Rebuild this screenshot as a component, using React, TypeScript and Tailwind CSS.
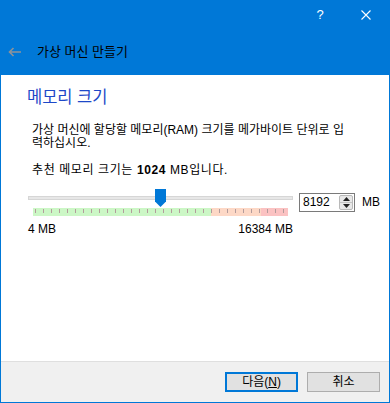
const ticks = Array.from({ length: 32 }, (_, i) => 2.5 + i * 8);

const SpinArrows = () => (
  <div className="ml-auto mr-px flex h-[15px] w-[14px] flex-col rounded-[2px] border border-[#b9b9b9] bg-[#e8e8e8]">
    <div className="flex flex-1 items-center justify-center">
      <svg width="7" height="4" viewBox="0 0 7 4">
        <path d="M3.5 0 L7 4 H0 Z" fill="#222" />
      </svg>
    </div>
    <div className="h-px bg-[#c4c4c4]" />
    <div className="flex flex-1 items-center justify-center">
      <svg width="7" height="4" viewBox="0 0 7 4">
        <path d="M0 0 H7 L3.5 4 Z" fill="#222" />
      </svg>
    </div>
  </div>
);

const App = () => {
  return (
    <div
      className="flex h-[403px] w-[390px] flex-col bg-[#0078d7] px-px pb-px text-black"
      style={{ fontFamily: '"Liberation Sans", "Noto Sans CJK KR", sans-serif' }}>
      {/* caption buttons */}
      <div className="flex h-[29px] justify-end">
        <div className="flex w-[46px] items-center justify-center text-[13px] text-white">?</div>
        <div className="flex w-[46px] items-center justify-center">
          <svg width="10" height="10" viewBox="0 0 10 10">
            <path d="M0.5 0.5 L9.5 9.5 M9.5 0.5 L0.5 9.5" stroke="#fff" strokeWidth="1.1" />
          </svg>
        </div>
      </div>

      {/* wizard title */}
      <div className="flex h-[46px] items-center">
        <svg className="ml-[7px]" width="14" height="10" viewBox="0 0 14 10">
          <path d="M13 5 H1.5 M5.5 1 L1.5 5 L5.5 9" stroke="#8e9399" strokeWidth="1.6" fill="none" />
        </svg>
        <span className="ml-[15px] text-[13px] leading-[14px]">가상 머신 만들기</span>
      </div>

      {/* page */}
      <div className="flex flex-1 flex-col bg-white">
        <h2 className="pl-[26px] pt-[12px] text-[16.5px] leading-[20px] text-[#1d48c8]">메모리 크기</h2>

        <p className="mt-[17px] whitespace-nowrap pl-[31px] text-[12px] leading-[13px]">
          가상 머신에 할당할 메모리(RAM) 크기를 메가바이트 단위로 입
          <br />
          력하십시오.
        </p>

        <p className="mt-[14px] pl-[31px] text-[12px] leading-[13px] tracking-[0.6px]">
          추천 메모리 크기는 <b>1024</b> MB입니다.
        </p>

        <div className="mt-[12px] flex items-start pl-[27px]">
          {/* slider */}
          <div className="relative w-[265px]">
            <div className="mt-[7px] h-[4px] border border-[#d6d6d6] bg-[#e7e7e7]" />
            <svg className="absolute left-[127px] top-0" width="11" height="18" viewBox="0 0 11 18">
              <path d="M0 0 H11 V12.5 L5.5 18 L0 12.5 Z" fill="#0078d7" />
            </svg>
            <svg className="ml-[5px] mt-[8px] block" width="255" height="8" viewBox="0 0 255 8">
              <rect x="0" y="0" width="178" height="8" fill="#ccf7c6" />
              <rect x="178" y="0" width="50" height="8" fill="#fdd8c6" />
              <rect x="228" y="0" width="27" height="8" fill="#fbc2c2" />
              {ticks.map((x) => (
                <rect key={x} x={x - 0.5} y="1" width="1" height="4" fill="#b39c9c" />
              ))}
            </svg>
            <div className="mt-[7px] flex justify-between text-[12px] leading-[13px]">
              <span>4 MB</span>
              <span>16384 MB</span>
            </div>
          </div>

          {/* spin box */}
          <div className="ml-[6px] mt-[4px] flex h-[19px] w-[56px] items-center border border-[#7a7a7a] bg-white">
            <span className="pl-[3px] text-[12px] leading-[13px]">8192</span>
            <SpinArrows />
          </div>
          <span className="ml-[7px] mt-[7px] text-[12px] leading-[13px]">MB</span>
        </div>
      </div>

      {/* footer */}
      <div className="flex h-[41px] justify-end gap-[9px] border-t border-[#dfdfdf] bg-[#f0f0f0] pr-[9px] pt-[10px]">
        <button className="flex h-[20px] w-[73px] items-center justify-center border-2 border-[#0078d7] bg-[#e1e1e1] text-[12px] leading-[13px]">
          다음(<span className="underline">N</span>)
        </button>
        <button className="flex h-[20px] w-[73px] items-center justify-center border border-[#adadad] bg-[#e1e1e1] text-[12px] leading-[13px]">
          취소
        </button>
      </div>
    </div>
  );
};

export default App;
